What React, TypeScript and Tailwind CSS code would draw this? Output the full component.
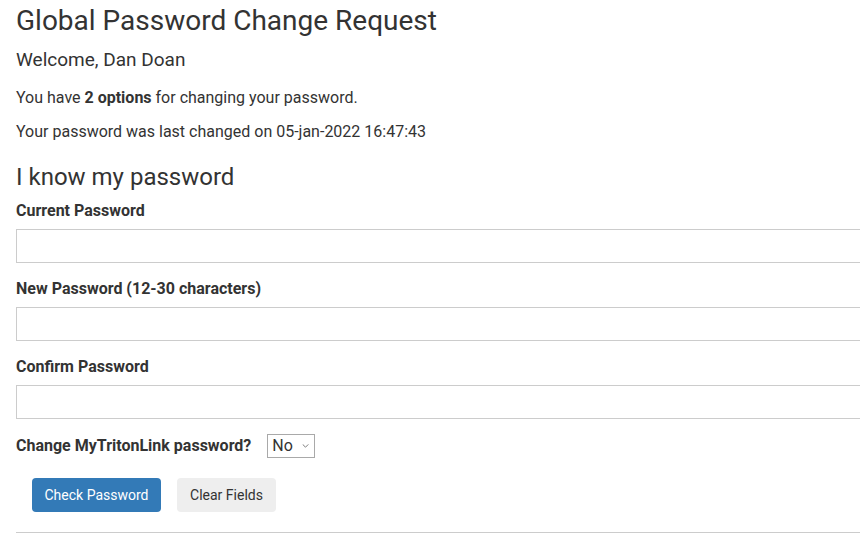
import { useState } from 'react'

const fields = [
  { id: 'current', label: 'Current Password' },
  { id: 'new', label: 'New Password (12-30 characters)' },
  { id: 'confirm', label: 'Confirm Password' },
]

export default function App() {
  const [values, setValues] = useState<Record<string, string>>({})
  const [changeMtl, setChangeMtl] = useState('No')

  return (
    <div className="w-full overflow-hidden bg-white font-['Roboto',sans-serif] text-[#333]">
      <div className="w-[920px] pl-4">
        <h1 className="pt-[5px] text-[28px] leading-[32px] font-normal">Global Password Change Request</h1>
        <h2 className="mt-[11px] text-[19px] leading-[24px] font-normal">Welcome, Dan Doan</h2>
        <p className="mt-[15px] text-[16px] leading-[22px]">
          You have <strong className="font-bold">2 options</strong> for changing your password.
        </p>
        <p className="mt-[12px] text-[16px] leading-[22px]">
          Your password was last changed on 05-jan-2022 16:47:43
        </p>

        <h3 className="mt-[20px] text-[24px] leading-[28px] font-normal">I know my password</h3>
        <form onSubmit={(e) => e.preventDefault()}>
          {fields.map((field, i) => (
            <div key={field.id} className={i === 0 ? 'mt-[10px]' : 'mt-[16px]'}>
              <label htmlFor={field.id} className="block text-[16px] leading-[20px] font-bold">
                {field.label}
              </label>
              <input
                id={field.id}
                type="password"
                value={values[field.id] ?? ''}
                onChange={(e) => setValues({ ...values, [field.id]: e.target.value })}
                className="mt-[8px] block h-[34px] w-full border border-[#ccc] bg-white px-2 text-[16px] outline-none"
              />
            </div>
          ))}

          <div className="mt-[15px] flex items-center">
            <label htmlFor="mtl" className="text-[16px] leading-[20px] font-bold">
              Change MyTritonLink password?
            </label>
            <div className="relative ml-4">
              <select
                id="mtl"
                value={changeMtl}
                onChange={(e) => setChangeMtl(e.target.value)}
                className="block h-[24px] w-[48px] appearance-none border border-[#a9a9a9] bg-white pl-[4px] text-[16px] leading-[22px] text-[#333] outline-none"
              >
                <option>No</option>
                <option>Yes</option>
              </select>
              <svg
                viewBox="0 0 8 5"
                className="pointer-events-none absolute top-[10px] left-[35px] h-[4px] w-[7px]"
                fill="none"
                stroke="#777"
                strokeWidth="1.2"
              >
                <path d="M0.5 0.5 L4 4 L7.5 0.5" />
              </svg>
            </div>
          </div>

          <div className="mt-[20px] flex gap-4 pl-4">
            <button
              type="submit"
              className="h-[34px] w-[129px] rounded bg-[#337ab7] text-[14px] text-white"
            >
              Check Password
            </button>
            <button
              type="button"
              onClick={() => setValues({})}
              className="h-[34px] w-[99px] rounded bg-[#eee] text-[14px] text-[#333]"
            >
              Clear Fields
            </button>
          </div>
        </form>

        <hr className="mt-[20px] border-t border-[#ccc]" />
      </div>
    </div>
  )
}
